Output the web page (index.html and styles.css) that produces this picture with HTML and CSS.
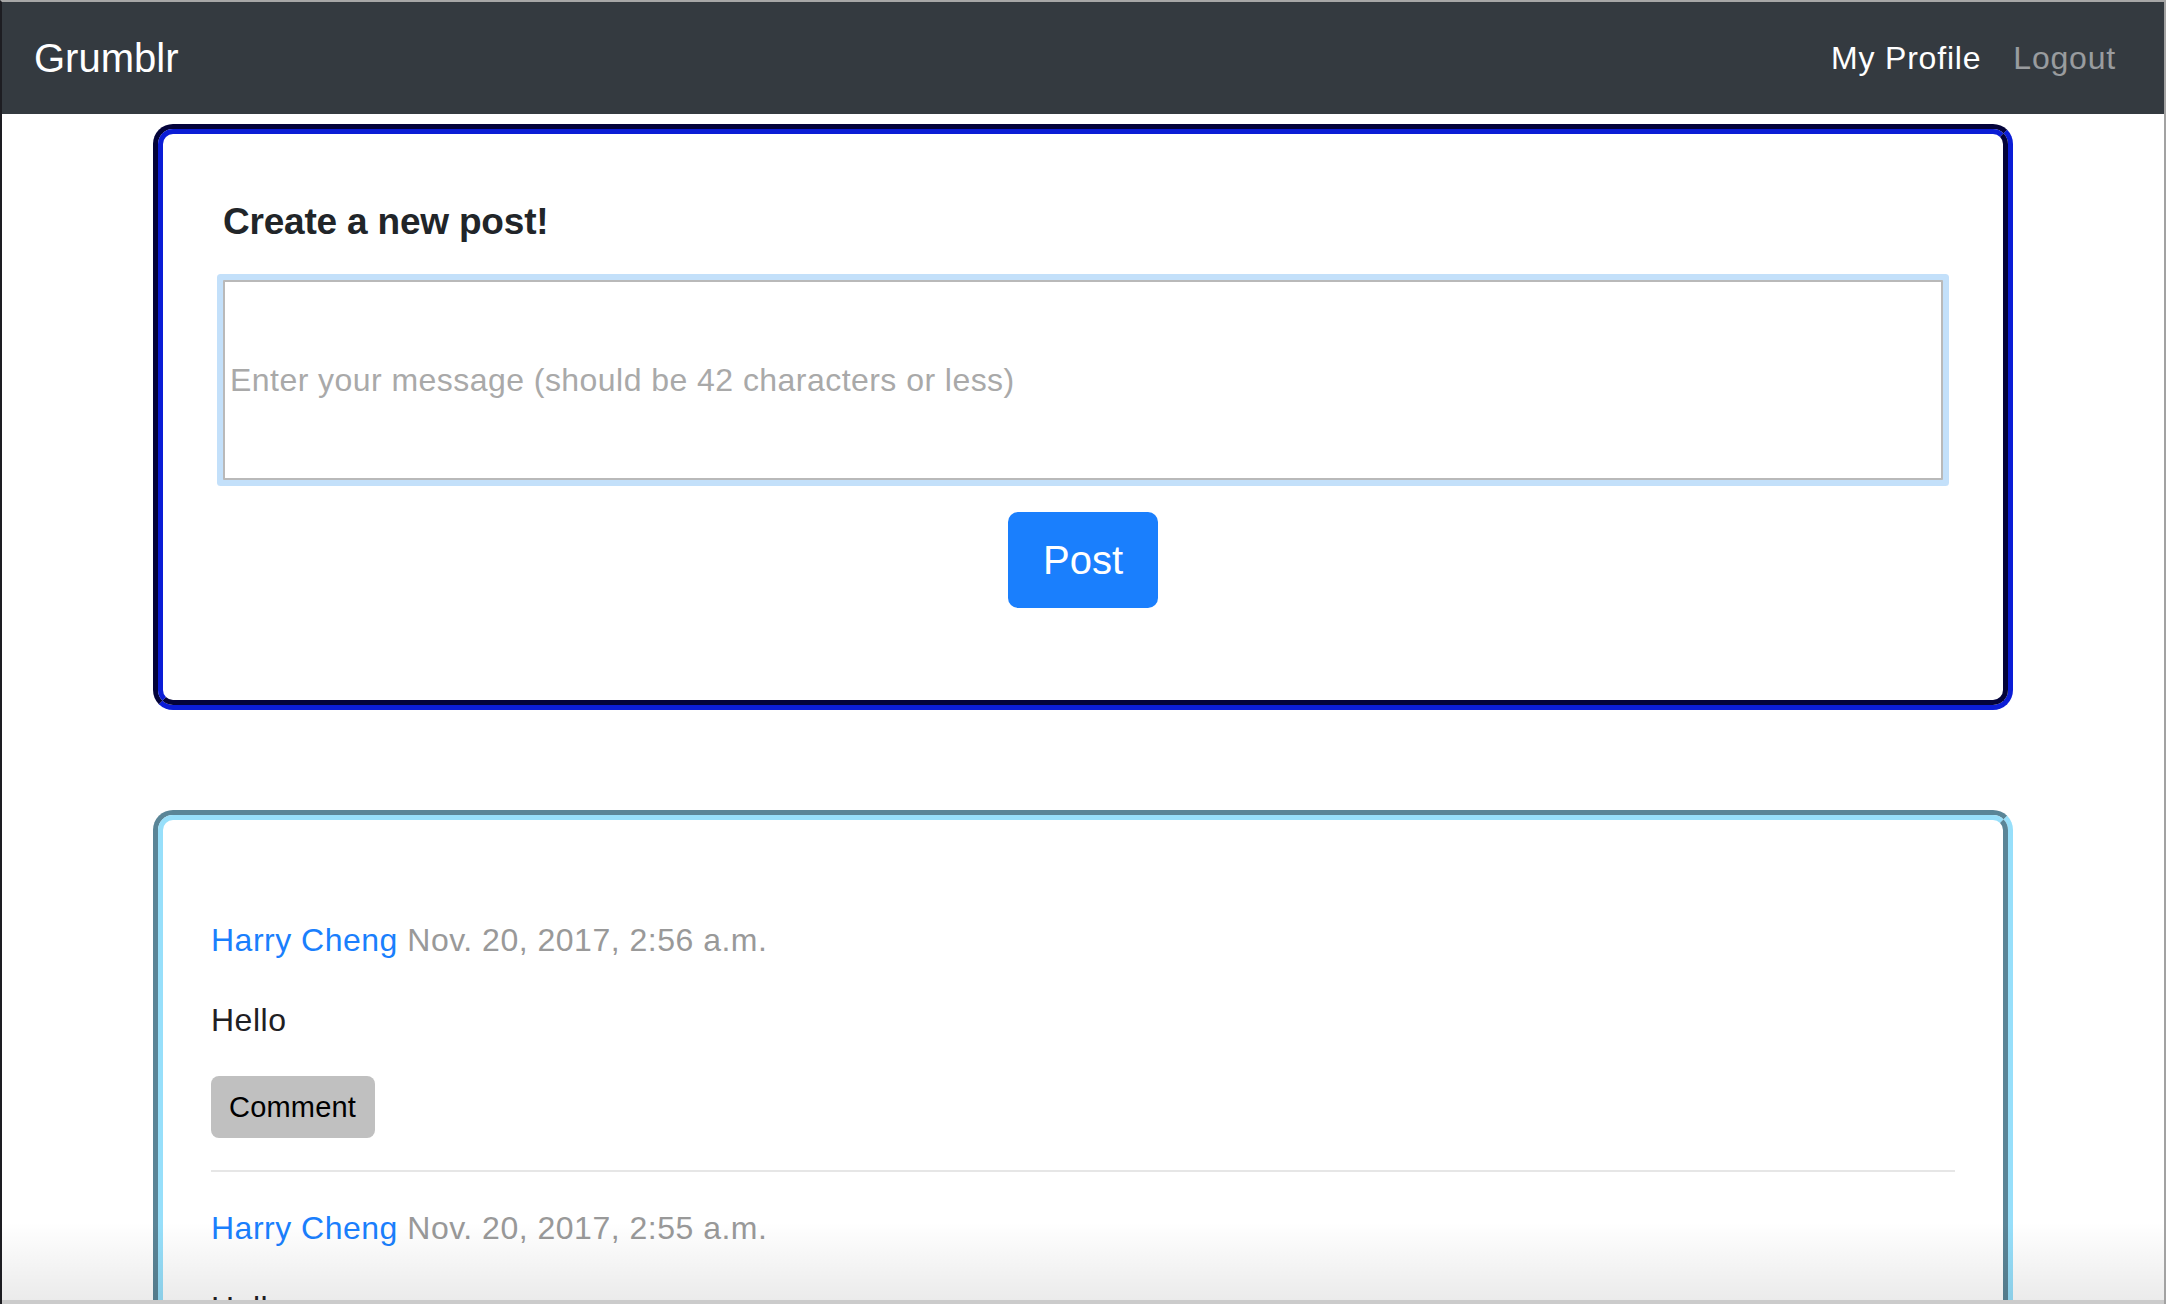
FILE: index.html
```html
<!DOCTYPE html>
<html lang="en">
<head>
<meta charset="utf-8">
<title>Grumblr</title>
<link rel="stylesheet" href="styles.css">
</head>
<body>
<div class="window">
  <nav class="navbar">
    <a class="brand" href="#">Grumblr</a>
    <div class="nav-links">
      <a class="nav-link active" href="#">My Profile</a>
      <a class="nav-link" href="#">Logout</a>
    </div>
  </nav>

  <main class="container">
    <section class="groove groove-blue">
      <div class="groove-inner new-post">
        <h5 class="new-post-title">Create a new post!</h5>
        <input class="message-input" type="text" placeholder="Enter your message (should be 42 characters or less)">
        <div class="post-row">
          <button class="btn-post" type="button">Post</button>
        </div>
      </div>
    </section>

    <section class="groove groove-sky">
      <div class="groove-inner stream">
        <article class="post">
          <p class="post-meta"><a class="author" href="#">Harry Cheng</a> <span class="date">Nov. 20, 2017, 2:56 a.m.</span></p>
          <p class="post-text">Hello</p>
          <button class="btn-comment" type="button">Comment</button>
        </article>
        <hr class="divider">
        <article class="post">
          <p class="post-meta"><a class="author" href="#">Harry Cheng</a> <span class="date">Nov. 20, 2017, 2:55 a.m.</span></p>
          <p class="post-text">Hello</p>
          <button class="btn-comment" type="button">Comment</button>
        </article>
      </div>
    </section>
  </main>

  <div class="bottom-fade"></div>
</div>
</body>
</html>
```

FILE: styles.css
```css
* {
  box-sizing: border-box;
}

html,
body {
  margin: 0;
  padding: 0;
  background: #fff;
}

body {
  font-family: "Liberation Sans", Arial, Helvetica, sans-serif;
  color: #212529;
  overflow: hidden;
}

.window {
  position: relative;
  height: 1304px;
  overflow: hidden;
  border-top: 2px solid #a7a7a7;
  border-left: 2px solid #1d1d22;
  border-right: 2px solid #a2a2a2;
}

/* ---------- navbar ---------- */
.navbar {
  display: flex;
  align-items: center;
  justify-content: space-between;
  height: 112px;
  padding: 16px 32px;
  background: #343a40;
}

.brand {
  font-size: 40px;
  line-height: 60px;
  padding: 10px 0;
  color: #fff;
  text-decoration: none;
}

.nav-links {
  display: flex;
}

.nav-link {
  font-size: 32px;
  line-height: 48px;
  padding: 16px;
  letter-spacing: 0.8px;
  color: rgba(255, 255, 255, 0.5);
  text-decoration: none;
}

.nav-link.active {
  color: #fff;
}

/* ---------- layout ---------- */
.container {
  width: 1920px;
  margin: 0 auto;
  padding: 0 30px;
}

/* groove border drawn as two nested rings */
.groove {
  border: 5px solid;
  border-radius: 20px;
}

.groove-inner {
  border: 5px solid;
  border-radius: 15px;
}

.groove-blue {
  margin-top: 10px;
  border-color: #03033a #0b1dd6 #0b1dd6 #03033a;
}

.groove-blue > .groove-inner {
  border-color: #0b1dd6 #03033a #03033a #0b1dd6;
}

.groove-sky {
  margin-top: 100px;
  border-color: #5a8597 #97dffa #97dffa #5a8597;
}

.groove-sky > .groove-inner {
  border-color: #97dffa #5a8597 #5a8597 #97dffa;
}

/* ---------- new post ---------- */
.new-post {
  padding: 64px 60px 92px;
}

.new-post-title {
  margin: 0;
  font-size: 37px;
  line-height: 48px;
  letter-spacing: -0.2px;
  font-weight: 700;
  color: #212529;
}

.message-input {
  display: block;
  width: 100%;
  height: 200px;
  margin-top: 34px;
  padding: 0 5px;
  border: 2px solid #b9b9b9;
  border-radius: 1px;
  box-shadow: 0 0 0 6px #c3e0fa;
  outline: none;
  font-family: inherit;
  font-size: 32px;
  letter-spacing: 0.45px;
  color: #212529;
  background: #fff;
}

.message-input::placeholder {
  color: #a9a9a9;
  opacity: 1;
}

.post-row {
  display: flex;
  justify-content: center;
  margin-top: 32px;
}

.btn-post {
  width: 150px;
  height: 96px;
  padding: 0;
  border: none;
  border-radius: 10px;
  background: #1a7ffd;
  color: #fff;
  font-family: inherit;
  font-size: 40px;
  line-height: 96px;
}

/* ---------- stream ---------- */
.stream {
  padding: 96px 48px 200px;
}

.post-meta,
.post-text {
  margin: 0 0 32px;
  font-size: 32px;
  line-height: 48px;
  letter-spacing: 0.5px;
}

.author {
  color: #1a7ffd;
  text-decoration: none;
}

.date {
  color: #999;
}

.post-text {
  color: #1f2023;
}

.btn-comment {
  display: block;
  height: 62px;
  padding: 0 19px 0 18px;
  border: none;
  border-radius: 8px;
  background: #c0c0c0;
  color: #000;
  font-family: inherit;
  font-size: 29px;
  letter-spacing: 0.2px;
  line-height: 62px;
}

.divider {
  height: 0;
  margin: 32px 0;
  border: 0;
  border-top: 2px solid #e6e6e6;
}

/* window bottom shading */
.bottom-fade {
  position: absolute;
  left: 0;
  right: 0;
  bottom: 0;
  height: 82px;
  border-bottom: 4px solid #cbcbcb;
  background: linear-gradient(to bottom, rgba(0, 0, 0, 0), rgba(0, 0, 0, 0.08));
  pointer-events: none;
}
```
